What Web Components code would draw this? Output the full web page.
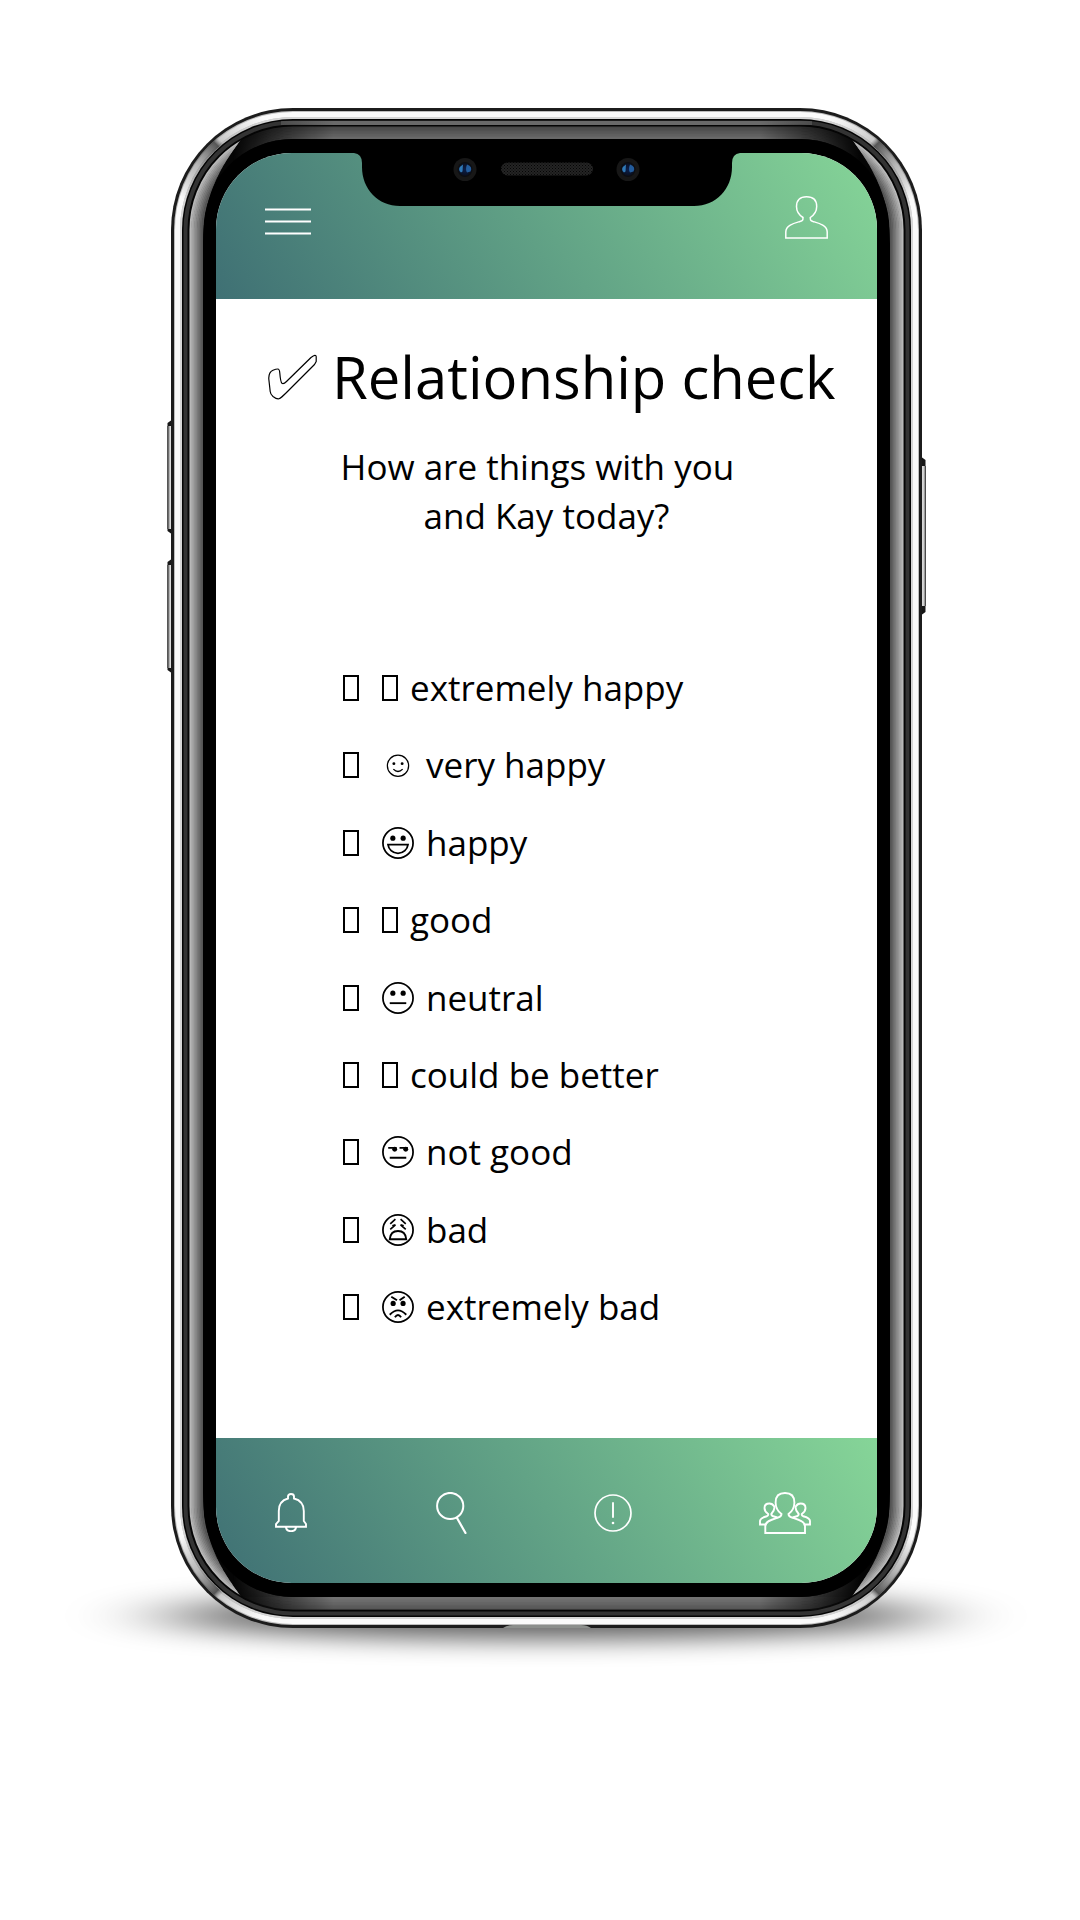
<!DOCTYPE html>
<html lang="en">
<head>
<meta charset="utf-8">
<meta name="viewport" content="width=device-width, initial-scale=1">
<title>Relationship check</title>
<style>
  body { margin: 0; background: #fff; color: #000; font-family: "Open Sans", "Noto Sans", sans-serif; font-size: 35px; }
</style>
</head>
<body>
<relationship-app></relationship-app>

<script>
const define = (name, html, setup) => customElements.define(name, class extends HTMLElement {
  connectedCallback() {
    if (this.shadowRoot) return;
    const t = document.createElement('template');
    t.innerHTML = typeof html === 'function' ? html(this) : html;
    this.attachShadow({ mode: 'open' }).append(t.content.cloneNode(true));
    if (setup) setup(this);
  }
});

/* Line icons, each [view width, view height, drawing, scale] */
const ring = '<circle cx="15.5" cy="15.5" r="14.6"/>';
const eyes = '<g fill="currentColor" stroke="none"><circle cx="10.5" cy="10.8" r="2.5"/><circle cx="20.5" cy="10.8" r="2.5"/></g>';
const ICONS = {
  menu: [46, 43, '<path d="M0 13.5h46M0 25.5h46M0 37.5h46" stroke-width="2.2"/>'],
  user: [43, 43, '<path stroke-width="1.5" d="M.8 42V36C.8 29 10 27 15 25.5C18 24.6 18 24 18 21.5C14 19 11.500 15 11.500 10.500C11.500 4 15 .8 21.500 .8S31.700 4 31.700 10.500C31.700 15 29 19 25.300 21.500C25.300 24 25.300 24.600 28 25.500C33 27 42.200 29 42.200 36V42Z"/>'],
  bell: [32, 39, '<path stroke-width="1.9" d="M13 5.500V3.500Q13 1 16 1T19 3.500V5.500C25.500 7.200 28.800 12 28.800 18V28L31 31V33.800H1V31L3.800 28V18C3.800 12 6.500 7.200 13 5.500ZM11 34.500C11.500 37 13.500 38.200 16 38.200S20.500 37 21 34.500"/>'],
  search: [33, 42, '<circle cx="16.200" cy="14" r="13.100" stroke-width="2"/><path d="M23 26L31.500 41" stroke-width="2.200" stroke-linecap="round"/>'],
  alert: [38, 38, '<circle cx="19" cy="19" r="18" stroke-width="1.700"/><path d="M19 9V23" stroke-width="1.900" stroke-linecap="round"/><circle cx="19" cy="29" r="1.300" fill="currentColor" stroke="none"/>'],
  group: [52, 42, '<g stroke-width="1.900"><path d="M6.300 41V34C6.300 29 14 27.200 19 25.600Q22.500 24.500 22.500 22C19 19.500 16.600 15.500 16.600 10.500C16.600 4 20 1 26 1S35.400 4 35.400 10.500C35.400 15.500 33 19.500 29.500 22Q29.500 24.500 33 25.600C38 27.200 46 29 46 34V41Z"/><path d="M7.500 32.500H1V29C1 26 5 25 8 24.200Q9.500 23.600 9.200 22C7 20.500 5.500 18 5.500 16C5.500 13 7.500 11.500 10.500 11.500Q13.500 11.500 15.300 14.500Q16 18 12.300 22Q12.300 24 15 24.500L18.500 25.500M44.500 32.500H51V29C51 26 47 25 44 24.200Q42.500 23.600 42.800 22C45 20.500 46.500 18 46.500 16C46.500 13 44.500 11.500 41.500 11.500Q38.500 11.500 36.700 14.500Q36 18 39.700 22Q39.700 24 37 24.500L33.500 25.500"/></g>'],
  check: [49, 46, '<path stroke-width="1.200" stroke-linejoin="round" d="M.8 25C.6 21 2 17.500 5 16.200Q8 15 9.800 15Q11.500 15 11.800 19C12.200 24 12.500 28 14 29.300C15.500 30.500 17 29 18.500 27.500L43 3.500Q48 -.5 48.200 2.800V7.500L46.500 10.500L18.500 38.500Q13 44 11 44.800Q9 45.500 5 42.500Q2.500 40.500 2.200 37.500Z"/>'],
  box: [16, 26, '<path d="M1 1H15V25H1Z" stroke-width="2"/>'],
  smile: [31, 31, '<circle cx="15.500" cy="16.200" r="10.300" stroke-width="1.200"/><g fill="currentColor" stroke="none"><circle cx="11.500" cy="14.200" r="1.400"/><circle cx="19.500" cy="14.200" r="1.400"/></g><path d="M11 19.500Q15.500 24 20 19.500" stroke-width="1.300"/>', 32 / 31],
  grin: [31, 31, ring + eyes + '<path d="M5.800 17H25.200C24.500 21.500 21 25.500 15.500 25.500S6.500 21.500 5.800 17Z" stroke-width="1.700"/>', 32 / 31],
  neutral: [31, 31, ring + eyes + '<path d="M7.500 20.500H23.500" stroke-width="1.800"/>', 32 / 31],
  unamused: [31, 31, ring + '<path d="M6 11.500H14M17 11.500H25M7.500 21H23.500" stroke-width="1.900"/><g fill="currentColor" stroke="none"><circle cx="12.300" cy="12.800" r="2.400"/><circle cx="23" cy="12.800" r="2.400"/></g>', 32 / 31],
  weary: [31, 31, ring + '<path d="M7.500 24.500C8 19 11 16.500 15.500 16.500S23 19 23.500 24.500Z" stroke-width="1.800"/><path d="M8 9.500L13 5M18 5L23 9.500M8 15L13 10.500L10 11.500M23 15L18 10.500L21 11.500" stroke-width="1.600"/>', 32 / 31],
  angry: [31, 31, ring + '<g fill="currentColor" stroke="none"><circle cx="10.800" cy="12" r="2.500"/><circle cx="20.400" cy="12" r="2.500"/></g><path d="M9 5.500L14.500 9M22 5.500L17 9" stroke-width="1.800"/><path d="M7.500 23Q15.500 14.500 23.500 23M12.500 25.500Q15.500 21 18.500 25.500" stroke-width="1.800"/>', 32 / 31]
};

define('line-icon', el => {
  const [w, h, d, s = 1] = ICONS[el.getAttribute('name')];
  return `<style>:host{display:block;flex:none}svg{display:block}</style>
  <svg width="${Math.round(w * s)}" height="${Math.round(h * s)}" viewBox="0 0 ${w} ${h}" fill="none" stroke="currentColor" stroke-width="1.7" aria-hidden="true">${d}</svg>`;
});

/* Concentric outlines that shade a band of the body from its outer edge inwards */
const bands = (from, to, step, dark, light) => {
  let out = '';
  for (let i = from; i <= to; i += step) {
    const v = Math.round(dark + (light - dark) * (i - from) / (to - from));
    out += `<rect x="${i}" y="${i}" width="${751 - 2 * i}" height="${1520 - 2 * i}" rx="${122 - i}" stroke="rgb(${v},${v},${v})" stroke-width="${step + .6}"/>`;
  }
  return out;
};

/* Metal body, glass edge and ground shadow; the screen is slotted inside */
define('phone-frame', `
<style>
  :host { display: block; position: relative; box-sizing: border-box; width: 100%; max-width: 751px; padding: 45px; }
  .body { position: absolute; inset: 0; width: 100%; height: 100%; overflow: visible; }
  .screen { position: relative; border-radius: 76px; overflow: hidden; background: #fff; }
</style>
<svg class="body" viewBox="0 0 751 1520" preserveAspectRatio="none" fill="none" aria-hidden="true">
  <defs>
    <filter id="soft" x="-40%" y="-300%" width="180%" height="700%"><feGaussianBlur stdDeviation="50 13"/></filter>
    <linearGradient id="fade"><stop stop-color="#000"/><stop offset=".16" stop-color="#fff"/><stop offset=".84" stop-color="#fff"/><stop offset="1" stop-color="#000"/></linearGradient>
    <linearGradient id="key"><stop stop-color="#222"/><stop offset=".3" stop-color="#aaa"/><stop offset=".5" stop-color="#dcdcdc"/><stop offset="1" stop-color="#d0d0d0"/></linearGradient>
    <linearGradient id="keyR"><stop stop-color="#bbb"/><stop offset=".3" stop-color="#e2e2e2"/><stop offset=".7" stop-color="#ccc"/><stop offset="1" stop-color="#222"/></linearGradient>
    <mask id="mid" maskUnits="userSpaceOnUse" x="0" y="0" width="751" height="1520"><rect x="62" width="627" height="1520" fill="url(#fade)"/></mask>
    <linearGradient id="glint" gradientUnits="userSpaceOnUse" x1="10" y1="90" x2="90" y2="8"><stop stop-color="#555" stop-opacity="0"/><stop offset=".3" stop-color="#777" stop-opacity=".5"/><stop offset=".55" stop-color="#444" stop-opacity=".9"/><stop offset=".6" stop-color="#aaa" stop-opacity=".6"/><stop offset="1" stop-color="#bbb" stop-opacity="0"/></linearGradient>
    <path id="glintArc" d="M7 122C7 58 58 7 122 7" stroke="url(#glint)" stroke-width="8"/>
    <clipPath id="sides"><path d="M17 124C19 74 42 44 71 30C54 54 32 82 32 136V1384C32 1438 54 1466 71 1490C42 1476 19 1446 17 1396ZM734 124C732 74 709 44 680 30C697 54 719 82 719 136V1384C719 1438 697 1466 680 1490C709 1476 732 1446 734 1396Z"/></clipPath>
    <clipPath id="ends"><path d="M62 0H689V60H62ZM62 1460H689V1520H62Z"/></clipPath>
  </defs>
  <ellipse cx="375" cy="1508" rx="385" ry="23" fill="#000" opacity=".64" filter="url(#soft)"/>
  <g>
    <path d="M-3.500 315L2 311V427L-3.500 423ZM-3.500 454L2 450V566L-3.500 562ZM754.500 352L749 348V508L754.500 504Z" fill="#161616"/>
    <rect x="-3.500" y="318" width="6" height="103" fill="url(#key)"/>
    <rect x="-3.500" y="457" width="6" height="103" fill="url(#key)"/>
    <rect x="748" y="358" width="7" height="140" fill="url(#keyR)"/>
  </g>
  <rect width="751" height="1520" rx="122" fill="#1c1c1c"/>
  <rect x="3" y="3" width="745" height="1514" rx="119" fill="#bdbdbd"/>
  <rect x="6.500" y="6.500" width="738" height="1507" rx="115.500" stroke="#fafafa" stroke-width="5"/>
  <rect x="10" y="10" width="731" height="1500" rx="112" stroke="#d6d6d6" stroke-width="2"/>
  <use href="#glintArc"/>
  <use href="#glintArc" transform="translate(751 0) scale(-1 1)"/>
  <use href="#glintArc" transform="translate(0 1520) scale(1 -1)"/>
  <use href="#glintArc" transform="translate(751 1520) scale(-1 -1)"/>
  <rect x="11" y="11" width="729" height="1498" rx="111" fill="#050505"/>
  <rect x="14.500" y="14.500" width="722" height="1491" rx="107.500" stroke="#333" stroke-width="4"/>
  <g mask="url(#mid)"><g clip-path="url(#ends)">
    <path d="M110 15H641" stroke="#6a6a6a" stroke-width="4"/>
    ${bands(19.5, 30, 1.5, 72, 104)}
    <path d="M62 1489H689V1502H62Z" fill="#fff" opacity=".08"/>
  </g></g>
  <rect x="31" y="31" width="689" height="1458" rx="91" fill="#000"/>
  <g clip-path="url(#sides)">${bands(19.5, 31.5, 1.5, 184, 84)}</g>
  <path d="M332 1520Q336 1517 342 1517H410Q416 1517 420 1520Z" fill="#8b8e8b"/>
</svg>
<div class="screen"><slot></slot></div>`);

define('phone-notch', `
<style>:host{display:block;position:absolute;top:0;left:50%;transform:translateX(-50%)}svg{display:block}</style>
<svg width="386" height="53" viewBox="0 0 386 53" aria-hidden="true">
  <defs>
    <pattern id="mesh" width="3" height="3" patternUnits="userSpaceOnUse"><rect width="3" height="3" fill="#242424"/><rect width="1" height="1" fill="#050505"/><rect x="1.500" y="1.500" width="1" height="1" fill="#050505"/></pattern>
    <radialGradient id="glass"><stop stop-color="#0b1f4c"/><stop offset="1" stop-color="#0a1020"/></radialGradient>
    <g id="lens"><circle r="11.500" fill="#171717"/><circle r="7.500" fill="#0d0e12"/><circle r="6.200" fill="url(#glass)"/><path d="M-2-5Q-8.500-1-4 3L-2.500 2Z" fill="#2f78b5"/><path d="M2-5Q8-3 5.500 2L2 3Q0 0 2-5Z" fill="#235c9c"/></g>
  </defs>
  <path d="M0 0H386Q378 1 378 10V14C378 36 362 53 340 53H46C24 53 8 36 8 14V10Q8 1 0 0Z"/>
  <use href="#lens" x="111" y="16.500"/><use href="#lens" x="274" y="16.500"/>
  <rect x="147" y="9.500" width="92" height="13" rx="6.500" fill="url(#mesh)"/>
</svg>`);

const BAR = 'display:flex;justify-content:space-between;box-sizing:border-box;color:#fff;background:linear-gradient(58deg,#3f7074,#62a386 50%,#86d598)';
const BUTTON = 'button{display:block;padding:0;border:0;background:none;color:inherit;cursor:pointer}';

define('app-header', `
<style>:host{${BAR};position:relative;align-items:flex-start;min-height:146px;padding:43px 49px 0}${BUTTON}</style>
<phone-notch></phone-notch>
<button type="button" aria-label="Menu"><line-icon name="menu"></line-icon></button>
<button type="button" aria-label="Profile"><line-icon name="user"></line-icon></button>`);

define('app-tabs', `
<style>:host{${BAR};align-items:center;min-height:145px;padding:4px 66px 0 59px}a{display:block;color:inherit}</style>
<a href="#alerts" aria-label="Notifications"><line-icon name="bell"></line-icon></a>
<a href="#search" aria-label="Search"><line-icon name="search"></line-icon></a>
<a href="#info" aria-label="Information"><line-icon name="alert"></line-icon></a>
<a href="#people" aria-label="People"><line-icon name="group"></line-icon></a>`);

define('mood-option', el => `
<style>
  :host { display: block; }
  label { display: flex; align-items: center; height: 48px; line-height: 48px; cursor: pointer; }
  input { appearance: none; flex: none; box-sizing: border-box; width: 16px; height: 26px; margin: 0 23px 0 0; border: 2px solid #000; background: #fff; }
  input:checked { background: #437877; }
  line-icon { margin-right: 12px; }
</style>
<label><input type="checkbox"><line-icon name="${el.getAttribute('icon')}"></line-icon><span><slot></slot></span></label>`);

define('mood-check', `
<style>
  :host { display: flex; flex-direction: column; flex: 1; padding: 38px 0 107px; }
  h1 { display: flex; align-items: center; gap: 15px; margin: 0; padding-left: 52px; font-size: 58px; line-height: 80px; font-weight: 400; white-space: nowrap; }
  p { margin: 25px 0 124px; line-height: 49px; text-align: center; }
  .list { flex: 1; display: flex; flex-direction: column; justify-content: space-between; padding-left: 127px; }
</style>
<h1><line-icon name="check"></line-icon><span>Relationship check</span></h1>
<p>How are things with you&nbsp;&nbsp;<br>and Kay today?</p>
<div class="list">
  <mood-option icon="box">extremely happy</mood-option>
  <mood-option icon="smile">very happy</mood-option>
  <mood-option icon="grin">happy</mood-option>
  <mood-option icon="box">good</mood-option>
  <mood-option icon="neutral">neutral</mood-option>
  <mood-option icon="box">could be better</mood-option>
  <mood-option icon="unamused">not good</mood-option>
  <mood-option icon="weary">bad</mood-option>
  <mood-option icon="angry">extremely bad</mood-option>
</div>`);

define('relationship-app', `
<style>
  :host { display: flex; justify-content: center; align-items: flex-start; box-sizing: border-box; min-height: 100vh; padding: 108px 0 108px 13px; overflow: hidden; }
  main { display: flex; flex-direction: column; min-height: 1430px; }
</style>
<phone-frame><main><app-header></app-header><mood-check></mood-check><app-tabs></app-tabs></main></phone-frame>`);
</script>
</body>
</html>
